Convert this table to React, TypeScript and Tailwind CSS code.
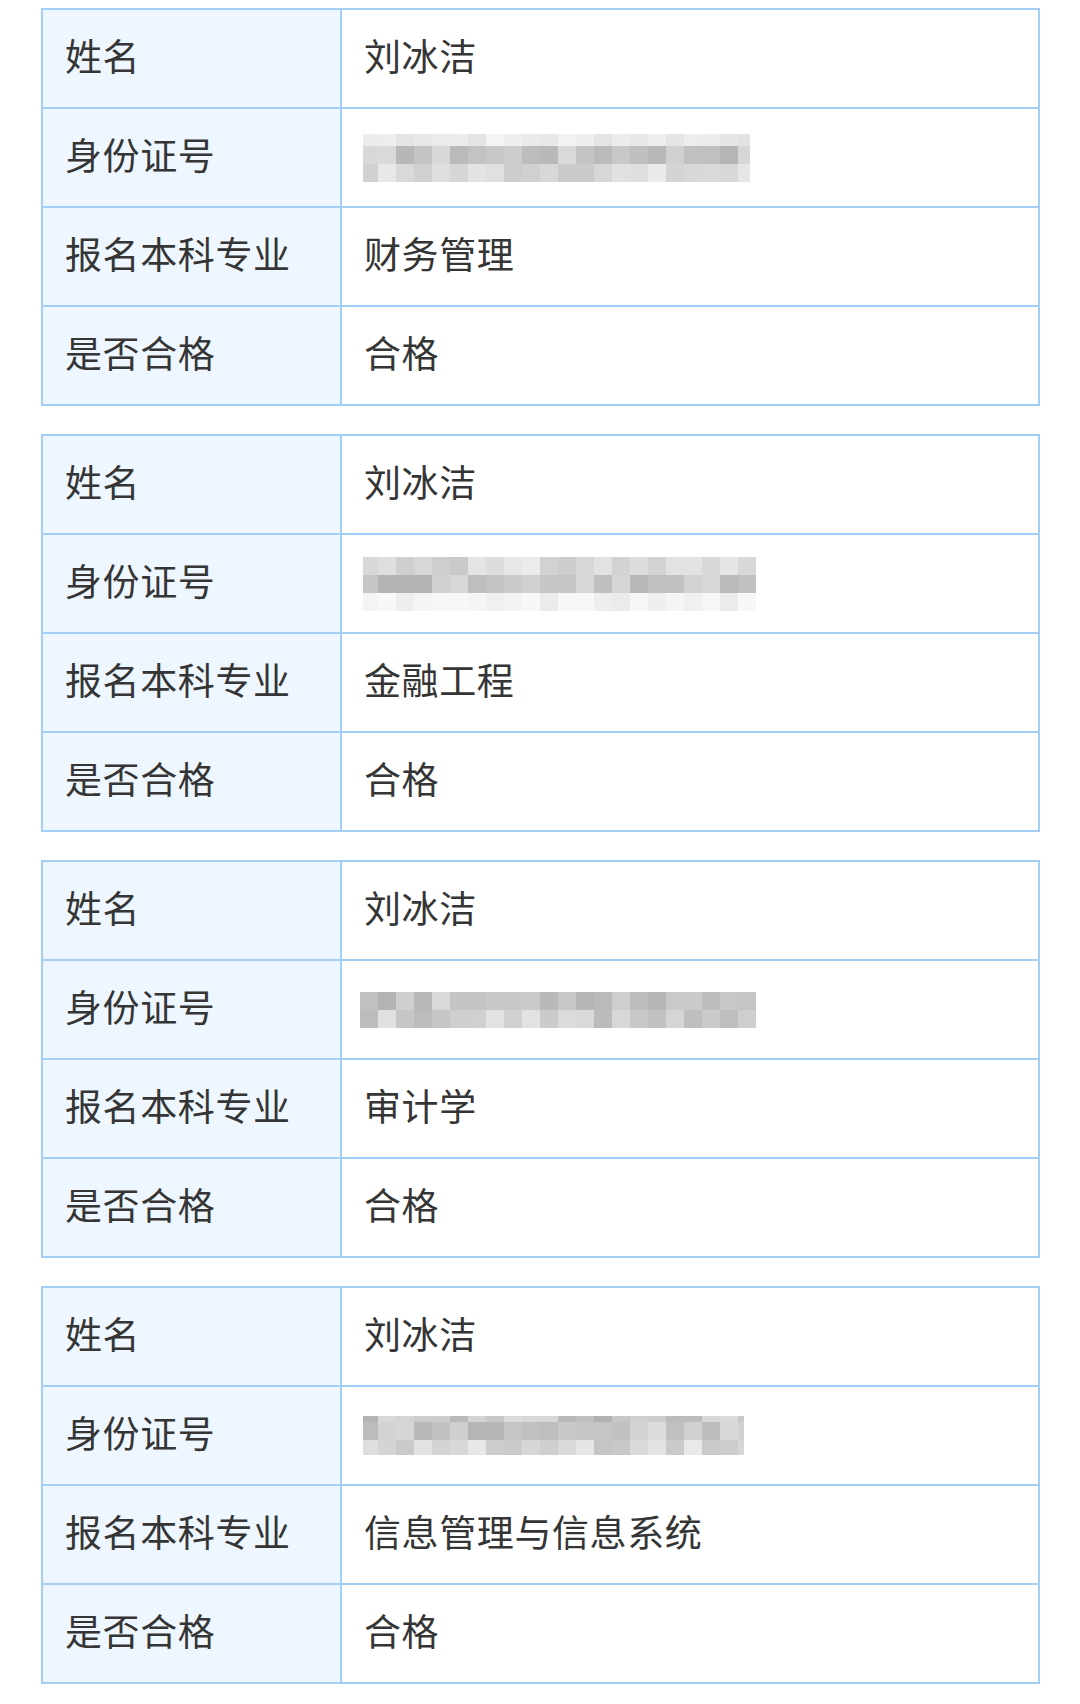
import React from "react";

type Mosaic = {
  cols: number[];
  rows: number[];
  ranges: [number, number][];
  seed: number;
};

type Record = {
  name: string;
  major: string;
  mosaic: Mosaic;
  pad: string;
};

function rng(seed: number) {
  let s = seed;
  return () => {
    s = (s * 9301 + 49297) % 233280;
    return s / 233280;
  };
}

const full = (first: number, last: number) => [first, ...Array(20).fill(18), last];

const records: Record[] = [
  {
    name: "刘冰洁",
    major: "财务管理",
    pad: "pl-[21px]",
    mosaic: { cols: full(15, 12), rows: [12, 18, 18], ranges: [[226, 246], [178, 218], [200, 236]], seed: 7 },
  },
  {
    name: "刘冰洁",
    major: "金融工程",
    pad: "pl-[21px]",
    mosaic: { cols: full(15, 18), rows: [18, 18, 18], ranges: [[200, 236], [178, 216], [234, 250]], seed: 31 },
  },
  {
    name: "刘冰洁",
    major: "审计学",
    pad: "pl-[18px]",
    mosaic: { cols: full(18, 18), rows: [18, 18], ranges: [[180, 218], [186, 226]], seed: 53 },
  },
  {
    name: "刘冰洁",
    major: "信息管理与信息系统",
    pad: "pl-[21px]",
    mosaic: { cols: full(15, 6), rows: [6, 18, 15], ranges: [[176, 226], [180, 222], [196, 234]], seed: 97 },
  },
];

function Pixelated({ mosaic }: { mosaic: Mosaic }) {
  const rand = rng(mosaic.seed);
  const width = mosaic.cols.reduce((a, b) => a + b, 0);
  const height = mosaic.rows.reduce((a, b) => a + b, 0);
  const rects: React.ReactNode[] = [];
  let y = 0;
  mosaic.rows.forEach((h, r) => {
    let x = 0;
    const [lo, hi] = mosaic.ranges[r];
    mosaic.cols.forEach((w, c) => {
      const g = Math.round(lo + rand() * (hi - lo));
      rects.push(<rect key={`${r}-${c}`} x={x} y={y} width={w} height={h} fill={`rgb(${g},${g},${g})`} />);
      x += w;
    });
    y += h;
  });
  return (
    <svg width={width} height={height} viewBox={`0 0 ${width} ${height}`} shapeRendering="crispEdges" className="block">
      {rects}
    </svg>
  );
}

function Row({
  label,
  children,
  first,
  pad = "pl-[22px] pb-[7px]",
}: {
  label: string;
  children: React.ReactNode;
  first?: boolean;
  pad?: string;
}) {
  return (
    <div className={`grid grid-cols-[299px_1fr] h-[97px] ${first ? "" : "box-content border-t-2 border-[#a2cff5]"}`}>
      <div className="flex items-center bg-[#eef7ff] border-r-2 border-[#a2cff5] pl-[22px] pb-[7px]">{label}</div>
      <div className={`flex items-center ${pad}`}>{children}</div>
    </div>
  );
}

export default function App() {
  return (
    <div
      className="min-h-[1704px] bg-white pt-[8px] pl-[41px] text-[37px] leading-none tracking-[0.6px] text-[#353535]"
      style={{ fontFamily: '"Noto Sans CJK SC", "Noto Sans", sans-serif' }}
    >
      <div className="flex w-[999px] flex-col gap-[28px]">
        {records.map((rec, i) => (
          <div key={i} className="border-2 border-[#a2cff5]">
            <Row label="姓名" first>
              {rec.name}
            </Row>
            <Row label="身份证号" pad={rec.pad}>
              <Pixelated mosaic={rec.mosaic} />
            </Row>
            <Row label="报名本科专业">{rec.major}</Row>
            <Row label="是否合格">合格</Row>
          </div>
        ))}
      </div>
    </div>
  );
}
